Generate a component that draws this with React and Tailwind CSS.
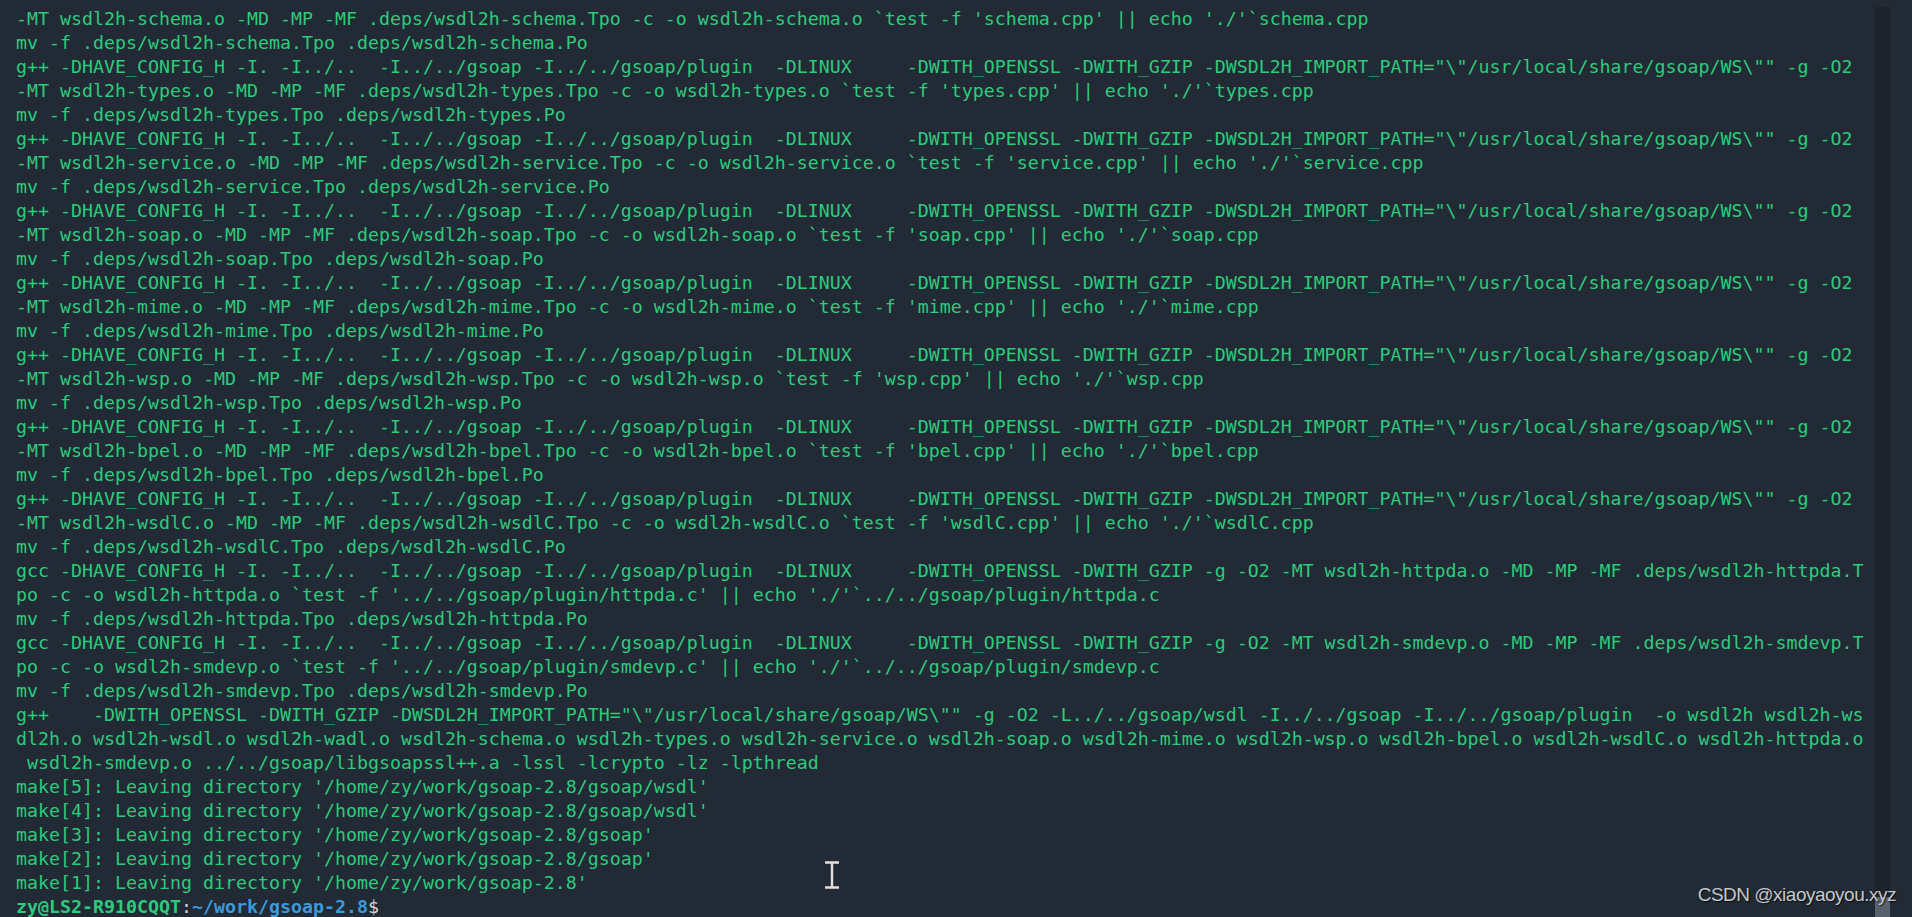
const GXX =
  'g++ -DHAVE_CONFIG_H -I. -I../..  -I../../gsoap -I../../gsoap/plugin  -DLINUX     -DWITH_OPENSSL -DWITH_GZIP -DWSDL2H_IMPORT_PATH="\\"/usr/local/share/gsoap/WS\\"" -g -O2'
const GCC =
  'gcc -DHAVE_CONFIG_H -I. -I../..  -I../../gsoap -I../../gsoap/plugin  -DLINUX     -DWITH_OPENSSL -DWITH_GZIP -g -O2'

const compile = (m) =>
  `-MT wsdl2h-${m}.o -MD -MP -MF .deps/wsdl2h-${m}.Tpo -c -o wsdl2h-${m}.o ` +
  '`' +
  `test -f '${m}.cpp' || echo './'` +
  '`' +
  `${m}.cpp`

const move = (m) => `mv -f .deps/wsdl2h-${m}.Tpo .deps/wsdl2h-${m}.Po`

const plugin = (m) => [
  `${GCC} -MT wsdl2h-${m}.o -MD -MP -MF .deps/wsdl2h-${m}.T`,
  `po -c -o wsdl2h-${m}.o ` + '`' + `test -f '../../gsoap/plugin/${m}.c' || echo './'` + '`' + `../../gsoap/plugin/${m}.c`,
  move(m),
]

const modules = ['types', 'service', 'soap', 'mime', 'wsp', 'bpel', 'wsdlC']

const lines = [
  compile('schema'),
  move('schema'),
  ...modules.flatMap((m) => [GXX, compile(m), move(m)]),
  ...plugin('httpda'),
  ...plugin('smdevp'),
  'g++    -DWITH_OPENSSL -DWITH_GZIP -DWSDL2H_IMPORT_PATH="\\"/usr/local/share/gsoap/WS\\"" -g -O2 -L../../gsoap/wsdl -I../../gsoap -I../../gsoap/plugin  -o wsdl2h wsdl2h-ws',
  'dl2h.o wsdl2h-wsdl.o wsdl2h-wadl.o wsdl2h-schema.o wsdl2h-types.o wsdl2h-service.o wsdl2h-soap.o wsdl2h-mime.o wsdl2h-wsp.o wsdl2h-bpel.o wsdl2h-wsdlC.o wsdl2h-httpda.o',
  ' wsdl2h-smdevp.o ../../gsoap/libgsoapssl++.a -lssl -lcrypto -lz -lpthread',
  "make[5]: Leaving directory '/home/zy/work/gsoap-2.8/gsoap/wsdl'",
  "make[4]: Leaving directory '/home/zy/work/gsoap-2.8/gsoap/wsdl'",
  "make[3]: Leaving directory '/home/zy/work/gsoap-2.8/gsoap'",
  "make[2]: Leaving directory '/home/zy/work/gsoap-2.8/gsoap'",
  "make[1]: Leaving directory '/home/zy/work/gsoap-2.8'",
]

function IBeam() {
  return (
    <svg className="absolute left-[824px] top-[861px]" width="16" height="28" viewBox="0 0 16 28">
      <path d="M1 1.5h14M1 26.5h14M8 1.5v25" stroke="#e6dfd7" strokeWidth="2.4" fill="none" />
    </svg>
  )
}

export default function App() {
  return (
    <div className="relative flex h-[917px] w-full overflow-hidden bg-[#212a35]">
      <div className="min-w-0 flex-1 pl-4 pt-[7px] font-['DejaVu_Sans_Mono',monospace] text-[18.27px] leading-6 text-[#2ecb7c]">
        {lines.map((l, i) => (
          <div key={i} className="whitespace-pre">
            {l}
          </div>
        ))}
        <div className="whitespace-pre font-bold">
          <span>zy@LS2-R910CQQT</span>
          <span className="font-normal text-[#d0d4d8]">:</span>
          <span className="text-[#3b9ade]">~/work/gsoap-2.8</span>
          <span className="font-normal text-[#d0d4d8]">$</span>
        </div>
      </div>

      {/* scrollbar */}
      <div className="mr-[22px] mt-[7px] flex w-[15px] flex-col justify-end bg-[#1c232d]">
        <div className="h-[20px] bg-[#59616d]" />
      </div>

      <IBeam />

      <div className="absolute bottom-[8px] right-[16px] font-['Liberation_Sans',sans-serif] text-[19px] tracking-[-0.5px] text-[#c4c8cc] [text-shadow:1px_1px_1px_rgba(0,0,0,0.7)]">
        CSDN @xiaoyaoyou.xyz
      </div>
    </div>
  )
}
